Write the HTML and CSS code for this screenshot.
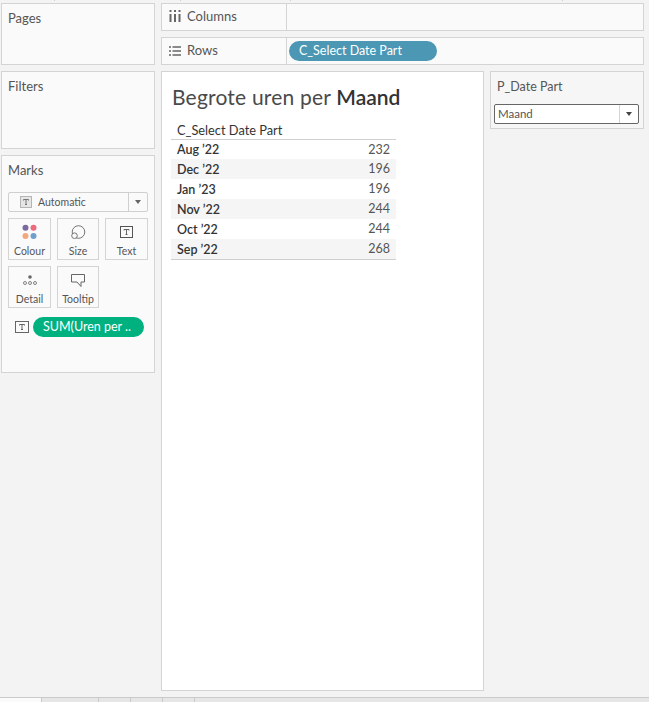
FILE: index.html
```html
<!DOCTYPE html>
<html lang="nl">
<head>
<meta charset="utf-8">
<title>Begrote uren per Maand</title>
<link rel="stylesheet" href="styles.css">
</head>
<body>
<div class="ruler"><i></i><i></i><i></i><i></i></div>
<div class="workspace">
  <aside class="side">
    <section class="card pages"><h2 class="card-title">Pages</h2></section>
    <section class="card filters"><h2 class="card-title">Filters</h2></section>
    <section class="card marks">
      <h2 class="card-title">Marks</h2>
      <div class="mark-type">
        <div class="mark-type-main">
          <svg class="ico-auto" width="12" height="12" viewBox="0 0 12 12"><rect x="0.5" y="0.5" width="11" height="11" fill="#e6e6e6" stroke="#b5b5b5"/><path d="M3.5 3.5h5M6 3.5v5M5 8.5h2M3.5 3.5v1M8.5 3.5v1" fill="none" stroke="#777"/></svg>
          <span>Automatic</span>
        </div>
        <div class="mark-type-arrow"><i class="caret caret-grey"></i></div>
      </div>
      <div class="mark-grid">
        <div class="mark-btn">
          <svg width="16" height="16" viewBox="0 0 16 16"><circle cx="3.500" cy="3.700" r="3" fill="#7b6a9e"/><circle cx="11.500" cy="3.700" r="3" fill="#ee6a7c"/><circle cx="3.500" cy="12" r="3" fill="#f2a77e"/><circle cx="11.500" cy="12" r="3" fill="#6f9fcc"/></svg>
          <span>Colour</span>
        </div>
        <div class="mark-btn">
          <svg width="16" height="16" viewBox="0 0 16 16"><circle cx="8.500" cy="8" r="6.300" fill="none" stroke="#666" stroke-width="0.9"/><circle cx="4.500" cy="11.700" r="2.800" fill="#fafafa" stroke="#666" stroke-width="0.9"/></svg>
          <span>Size</span>
        </div>
        <div class="mark-btn">
          <svg width="14" height="16" viewBox="0 0 14 16"><rect x="0.500" y="2.500" width="12" height="11" fill="none" stroke="#555"/><path d="M4 5.500h5M6.500 5.500v5M5.500 10.500h2M4 5.500v1M9 5.500v1" fill="none" stroke="#555" stroke-width="0.9"/></svg>
          <span>Text</span>
        </div>
        <div class="mark-btn">
          <svg width="16" height="16" viewBox="0 0 16 16"><circle cx="8" cy="5" r="1.800" fill="#666"/><circle cx="3" cy="11" r="1.500" fill="none" stroke="#666" stroke-width="0.8"/><circle cx="8" cy="11" r="1.500" fill="none" stroke="#666" stroke-width="0.8"/><circle cx="13" cy="11" r="1.500" fill="none" stroke="#666" stroke-width="0.8"/></svg>
          <span>Detail</span>
        </div>
        <div class="mark-btn">
          <svg width="16" height="16" viewBox="0 0 16 16"><path d="M1.500 2.500h13v7.500h-3.500v4.500l-4-4.500h-5.500z" fill="none" stroke="#666"/></svg>
          <span>Tooltip</span>
        </div>
      </div>
      <div class="mark-field">
        <svg width="14" height="12" viewBox="0 0 14 12"><rect x="0.5" y="0.500" width="13" height="11" fill="none" stroke="#666"/><path d="M4.500 3.500h5M7 3.500v5M6 8.500h2M4.500 3.500v1M9.500 3.500v1" fill="none" stroke="#555" stroke-width="0.9"/></svg>
        <span class="pill pill-green">SUM(Uren per ..</span>
      </div>
    </section>
  </aside>
  <div class="center">
    <div class="shelf">
      <div class="shelf-label">
        <svg width="12" height="12" viewBox="0 0 12 12"><path d="M1.500 0v2M6 0v2M10.500 0v2M1.500 4v8M6 4v8M10.500 4v8" fill="none" stroke="#666" stroke-width="2"/></svg>
        <span>Columns</span>
      </div>
      <div class="shelf-body"></div>
    </div>
    <div class="shelf">
      <div class="shelf-label">
        <svg width="12" height="12" viewBox="0 0 12 12"><path d="M0 3h2M3.500 3h8.500M0 7h2M3.500 7h8.500M0 11h2M3.500 11h8.500" fill="none" stroke="#666" stroke-width="1.500"/></svg>
        <span>Rows</span>
      </div>
      <div class="shelf-body"><span class="pill pill-blue">C_Select Date Part</span></div>
    </div>
    <div class="content">
      <main class="view">
        <h1 class="view-title">Begrote uren per <b>Maand</b></h1>
        <div class="crosstab">
          <div class="ct-head">C_Select Date Part</div>
          <div class="ct-row"><span class="ct-label">Aug ’22</span><span class="ct-value">232</span></div>
          <div class="ct-row"><span class="ct-label">Dec ’22</span><span class="ct-value">196</span></div>
          <div class="ct-row"><span class="ct-label">Jan ’23</span><span class="ct-value">196</span></div>
          <div class="ct-row"><span class="ct-label">Nov ’22</span><span class="ct-value">244</span></div>
          <div class="ct-row"><span class="ct-label">Oct ’22</span><span class="ct-value">244</span></div>
          <div class="ct-row"><span class="ct-label">Sep ’22</span><span class="ct-value">268</span></div>
        </div>
      </main>
      <aside class="card param">
        <h2 class="param-title">P_Date Part</h2>
        <div class="select">
          <span class="select-value">Maand</span>
          <div class="select-arrow"><i class="caret caret-dark"></i></div>
        </div>
      </aside>
    </div>
  </div>
</div>
<nav class="tabs">
  <div class="tab tab-active"></div>
  <div class="tab tab-wide"></div>
  <div class="tab tab-small"></div>
  <div class="tab tab-small"></div>
  <div class="tab tab-small"></div>
</nav>
</body>
</html>
```

FILE: styles.css
```css
* { box-sizing: border-box; }
html, body { margin: 0; height: 100%; }
body {
  width: 649px;
  height: 702px;
  overflow: hidden;
  background: #f3f3f3;
  font-family: Lato, "Open Sans", sans-serif;
  color: #4a4a4a;
  display: flex;
  flex-direction: column;
}
.ruler {
  flex: none;
  height: 2px;
  display: grid;
  grid-template-columns: 55px 126px 110px 272px;
}
.ruler i {
  display: block;
  height: 1px;
  border-right: 1px solid #d0d0d0;
}
.workspace {
  display: flex;
  flex: none;
  gap: 6px;
  padding: 1px 5px 6px 1px;
  height: 695px;
}
.side {
  width: 154px;
  flex: none;
  display: flex;
  flex-direction: column;
  gap: 6px;
}
.card {
  background: #fafafa;
  border: 1px solid #d4d4d4;
}
.card-title {
  margin: 0;
  padding: 7px 0 0 6px;
  font-size: 13px;
  line-height: 15px;
  font-weight: 400;
  color: #555;
}
.pages { height: 62px; }
.filters { height: 78px; }
.marks { height: 218px; }
.mark-type {
  display: flex;
  height: 20px;
  margin: 14px 6px 0 6px;
  border: 1px solid #cfcfcf;
  background: #fafafa;
  border-radius: 2px;
}
.mark-type-main {
  flex: 1;
  display: flex;
  align-items: center;
  gap: 6px;
  padding: 0 0 1px 11px;
  font-size: 10.500px;
  color: #555;
  border-right: 1px solid #cfcfcf;
}
.mark-type-arrow {
  width: 18px;
  display: flex;
  align-items: center;
  justify-content: center;
}
.caret {
  display: block;
  width: 0;
  height: 0;
  border-left: 3.500px solid transparent;
  border-right: 3.500px solid transparent;
  border-top: 4px solid #666;
}
.caret-dark { border-top-color: #444; }
.mark-grid {
  display: grid;
  grid-template-columns: 43px 42px 43px;
  grid-auto-rows: 42px;
  column-gap: 6px;
  row-gap: 6px;
  margin: 6px 0 0 6px;
}
.mark-btn {
  border: 1px solid #d4d4d4;
  display: flex;
  flex-direction: column;
  align-items: center;
  padding-top: 5px;
  font-size: 10.500px;
  line-height: 13px;
  color: #555;
  gap: 5px;
}
.mark-btn svg { flex: none; }
.mark-field {
  display: flex;
  align-items: center;
  gap: 4px;
  margin: 9px 0 0 13px;
}
.pill {
  display: block;
  height: 20px;
  border-radius: 10px;
  color: #fff;
  font-size: 12.500px;
  line-height: 20px;
  white-space: nowrap;
}
.pill-green {
  width: 111px;
  background: #00b180;
  padding-left: 10px;
}
.pill-blue {
  width: 148px;
  background: #4b97b4;
  padding-left: 10px;
}
.center {
  width: 483px;
  flex: none;
  display: flex;
  flex-direction: column;
  gap: 6px;
}
.shelf {
  display: flex;
  height: 28px;
  flex: none;
  background: #fafafa;
  border: 1px solid #d4d4d4;
}
.shelf-label {
  width: 125px;
  flex: none;
  display: flex;
  align-items: center;
  gap: 6px;
  padding: 0 0 2px 7px;
  font-size: 13px;
  color: #555;
  border-right: 1px solid #d4d4d4;
}
.shelf-body {
  flex: 1;
  display: flex;
  align-items: center;
  padding-left: 2px;
}
.content {
  flex: 1;
  display: flex;
  align-items: flex-start;
  gap: 6px;
}
.view {
  width: 323px;
  height: 620px;
  background: #fff;
  border: 1px solid #d4d4d4;
  padding: 0 0 0 9px;
}
.view-title {
  margin: 12px 0 0 1px;
  font-size: 21px;
  line-height: 26px;
  font-weight: 400;
  letter-spacing: 0.200px;
  color: #4a4a4a;
}
.view-title b { font-weight: 600; color: #333; letter-spacing: 0; }
.crosstab {
  width: 225px;
  margin-top: 13px;
  border-bottom: 1px solid #cfcfcf;
}
.ct-head {
  height: 17px;
  padding-left: 6px;
  font-size: 12.800px;
  line-height: 14px;
  color: #333;
  border-bottom: 1px solid #cfcfcf;
  white-space: nowrap;
}
.ct-row {
  display: flex;
  justify-content: space-between;
  align-items: center;
  height: 20px;
  padding: 0 6px;
  font-size: 12.500px;
}
.ct-row:nth-child(2) { height: 19px; }
.ct-row:nth-child(odd) { background: #f5f5f5; }
.ct-label { color: #333; font-weight: 600; }
.ct-value { color: #555; padding-bottom: 1px; }
.param {
  flex: 1;
  height: 58px;
  background: #f6f6f6;
  padding: 0 4px 0 3px;
}
.param-title {
  margin: 0;
  padding: 7px 0 0 3px;
  font-size: 12.500px;
  line-height: 16px;
  font-weight: 400;
  color: #555;
}
.select {
  display: flex;
  height: 20px;
  margin-top: 9px;
  background: #fff;
  border: 1px solid #666;
  border-radius: 2px;
  font-size: 11.500px;
}
.select-value {
  flex: 1;
  padding-left: 3px;
  line-height: 18px;
  color: #555;
  border-right: 1px solid #d4d4d4;
}
.select-arrow {
  width: 18px;
  display: flex;
  align-items: center;
  justify-content: center;
}
.tabs {
  flex: 1;
  display: flex;
  background: #e6e6e6;
  border-top: 1px solid #cacaca;
}
.tab { border-right: 1px solid #cacaca; }
.tab-active { width: 42px; background: #fafafa; }
.tab-wide { width: 57px; }
.tab-small { width: 32px; }
```
